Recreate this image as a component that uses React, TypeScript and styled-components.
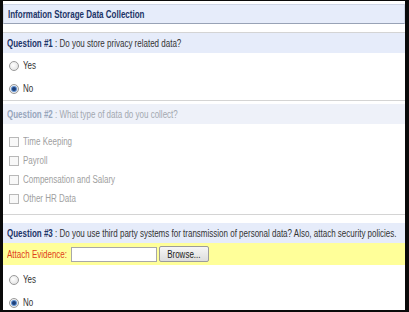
import React from 'react';
import styled, { createGlobalStyle } from 'styled-components';

const GlobalStyle = createGlobalStyle`
  html, body {
    margin: 0;
    padding: 0;
    background: #ffffff;
  }
  body {
    font-family: "Liberation Sans", Arial, sans-serif;
    font-size: 10px;
    color: #333;
  }
`;

// the screenshot's font is a narrow Arial; squeeze the text horizontally to match
const Squeeze = styled.span<{ $origin?: string }>`
  display: inline-block;
  white-space: nowrap;
  transform: scaleX(0.8);
  transform-origin: ${(p) => p.$origin ?? 'left'} center;
`;

const Frame = styled.div`
  box-sizing: border-box;
  width: 409px;
  height: 312px;
  border-style: solid;
  border-color: #0a0a0a;
  border-width: 1px 4px 2px 3px;
  background: #fff;
  overflow: hidden;
  display: flex;
  flex-direction: column;

  & > * {
    flex-shrink: 0;
  }
`;

const Header = styled.div`
  margin-top: 3px;
  height: 20px;
  box-sizing: border-box;
  display: flex;
  align-items: center;
  padding-left: 4px;
  background: #e6ecfa;
  border: 1px solid #cfd6e6;
  border-bottom-color: #98a2b6;
  color: #1c3467;
  font-weight: bold;
`;

const Section = styled.div<{ $gap: number }>`
  margin-top: ${(p) => p.$gap}px;
  border-top: 1px solid #d4d4d4;
`;

const Bar = styled.div<{ $muted?: boolean; $top?: number }>`
  margin-top: ${(p) => p.$top ?? 0}px;
  height: 20px;
  display: flex;
  align-items: center;
  padding-left: 4px;
  background: ${(p) => (p.$muted ? '#eef1f9' : '#e6ecfa')};
  color: ${(p) => (p.$muted ? '#a3a8b0' : '#333')};
  overflow: hidden;

  b {
    color: ${(p) => (p.$muted ? '#98a6bc' : '#1c3467')};
  }
`;

const Options = styled.div<{ $top: number; $bottom: number; $row: number }>`
  padding-top: ${(p) => p.$top}px;
  padding-bottom: ${(p) => p.$bottom}px;
  display: flex;
  flex-direction: column;

  & > div {
    height: ${(p) => p.$row}px;
  }
`;

const Option = styled.div<{ $muted?: boolean }>`
  display: flex;
  align-items: center;
  padding-left: 6px;
  gap: 4px;
  color: ${(p) => (p.$muted ? '#a0a0a0' : '#333')};
`;

const Radio = styled.span<{ $checked?: boolean }>`
  box-sizing: border-box;
  width: 10px;
  height: 10px;
  border-radius: 50%;
  border: 1px solid #9a9a9a;
  background: radial-gradient(circle at 40% 40%, #ffffff, #dcdcdc);
  display: flex;
  align-items: center;
  justify-content: center;

  &::after {
    content: '';
    display: ${(p) => (p.$checked ? 'block' : 'none')};
    width: 4px;
    height: 4px;
    border-radius: 50%;
    background: #1e3f78;
    box-shadow: 0 0 0 1px #5e8fd0;
  }
`;

const Checkbox = styled.span`
  box-sizing: border-box;
  width: 10px;
  height: 10px;
  border: 1px solid #b8b8b8;
  background: #f8f8f8;
`;

const EvidenceRow = styled.div`
  height: 22px;
  display: flex;
  align-items: center;
  padding-left: 4px;
  background: #ffff99;
  color: #e0401a;
`;

const EvidenceLabel = styled.span`
  width: 57px;
  margin-right: 7px;
`;

const FileInput = styled.div`
  box-sizing: border-box;
  width: 86px;
  height: 15px;
  border: 1px solid #a8a8a8;
  background: #fff;
  margin-right: 2px;
`;

const BrowseButton = styled.div`
  box-sizing: border-box;
  width: 50px;
  height: 16px;
  border: 1px solid #9c9c9c;
  border-radius: 2px;
  background: linear-gradient(#f6f6f6, #dddddd);
  color: #222;
  display: flex;
  align-items: center;
  justify-content: center;
`;

export default function App() {
  return (
    <Frame>
      <GlobalStyle />
      <Header>
        <Squeeze>Information Storage Data Collection</Squeeze>
      </Header>

      <Section $gap={8}>
        <Bar>
          <Squeeze>
            <b>Question #1</b> : Do you store privacy related data?
          </Squeeze>
        </Bar>
        <Options $top={1} $bottom={0} $row={23}>
          <Option>
            <Radio />
            <Squeeze>Yes</Squeeze>
          </Option>
          <Option>
            <Radio $checked />
            <Squeeze>No</Squeeze>
          </Option>
        </Options>
      </Section>

      <Section $gap={0}>
        <Bar $muted $top={3}>
          <Squeeze>
            <b>Question #2</b> : What type of data do you collect?
          </Squeeze>
        </Bar>
        <Options $top={8} $bottom={6} $row={19}>
          <Option $muted>
            <Checkbox />
            <Squeeze>Time Keeping</Squeeze>
          </Option>
          <Option $muted>
            <Checkbox />
            <Squeeze>Payroll</Squeeze>
          </Option>
          <Option $muted>
            <Checkbox />
            <Squeeze>Compensation and Salary</Squeeze>
          </Option>
          <Option $muted>
            <Checkbox />
            <Squeeze>Other HR Data</Squeeze>
          </Option>
        </Options>
      </Section>

      <Section $gap={0}>
        <Bar $top={8}>
          <Squeeze>
            <b>Question #3</b> : Do you use third party systems for transmission of personal data?
            Also, attach security policies.
          </Squeeze>
        </Bar>
        <EvidenceRow>
          <EvidenceLabel>
            <Squeeze>Attach Evidence:</Squeeze>
          </EvidenceLabel>
          <FileInput />
          <BrowseButton>
            <Squeeze $origin="center">Browse...</Squeeze>
          </BrowseButton>
        </EvidenceRow>
        <Options $top={3} $bottom={0} $row={23}>
          <Option>
            <Radio />
            <Squeeze>Yes</Squeeze>
          </Option>
          <Option>
            <Radio $checked />
            <Squeeze>No</Squeeze>
          </Option>
        </Options>
      </Section>
    </Frame>
  );
}
